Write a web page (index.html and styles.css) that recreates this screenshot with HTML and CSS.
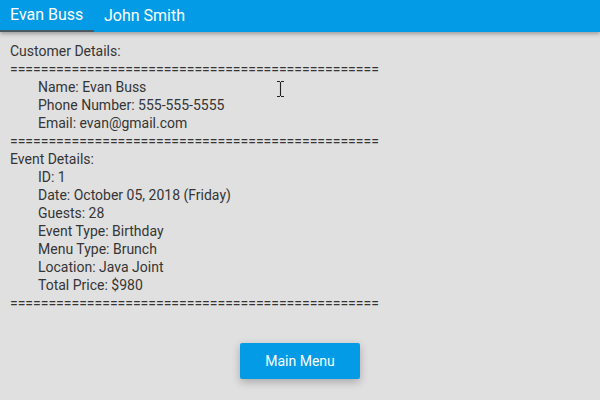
FILE: index.html
```html
<!DOCTYPE html>
<html>
<head>
<meta charset="utf-8">
<link rel="stylesheet" href="styles.css">
</head>
<body>
<div class="tabs">
  <div class="tab active">Evan Buss</div>
  <div class="tab">John Smith</div>
</div>
<div class="content">
  <div class="line">Customer Details:</div>
  <div class="line">================================================</div>
  <div class="line indent">Name: Evan Buss</div>
  <div class="line indent">Phone Number: 555-555-5555</div>
  <div class="line indent">Email: evan@gmail.com</div>
  <div class="line">================================================</div>
  <div class="line">Event Details:</div>
  <div class="line indent">ID: 1</div>
  <div class="line indent">Date: October 05, 2018 (Friday)</div>
  <div class="line indent">Guests: 28</div>
  <div class="line indent">Event Type: Birthday</div>
  <div class="line indent">Menu Type: Brunch</div>
  <div class="line indent">Location: Java Joint</div>
  <div class="line indent">Total Price: $980</div>
  <div class="line">================================================</div>
</div>
<div class="actions">
  <button class="btn">Main Menu</button>
</div>
<svg class="cursor" width="7" height="16" viewBox="0 0 7 16"><path d="M0 0.5h3M4 0.5h3M3.5 1v14M0 15.5h3M4 15.5h3" stroke="#222" stroke-width="1.1" fill="none"/></svg>
</body>
</html>
```

FILE: styles.css
```css
html, body {
  margin: 0;
  padding: 0;
}
body {
  width: 600px;
  height: 400px;
  background: #e0e0e0;
  font-family: Roboto, "Liberation Sans", sans-serif;
  overflow: hidden;
  position: relative;
}
.tabs {
  display: flex;
  height: 32px;
  background: #039be5;
  box-shadow: 0 2px 4px rgba(0,0,0,0.3);
  position: relative;
}
.tab {
  color: #fff;
  font-size: 16px;
  line-height: 32px;
  padding: 0 10px;
  box-sizing: border-box;
  height: 32px;
}
.tab.active {
  width: 94px;
  border-bottom: 2px solid #4a5a63;
  line-height: 30px;
}
.content {
  padding: 10px 10px 0 10px;
  color: #353535;
  font-size: 14px;
}
.line {
  height: 18px;
  line-height: 18px;
  white-space: nowrap;
}
.indent {
  padding-left: 28px;
}
.actions {
  display: flex;
  justify-content: center;
  margin-top: 31px;
}
.btn {
  width: 120px;
  height: 36px;
  background: #039be5;
  color: #fff;
  border: none;
  border-radius: 2px;
  font-family: Roboto, "Liberation Sans", sans-serif;
  font-size: 14px;
  box-shadow: 0 3px 8px rgba(0,0,0,0.25);
}
.cursor {
  position: absolute;
  left: 277px;
  top: 81px;
}
```
